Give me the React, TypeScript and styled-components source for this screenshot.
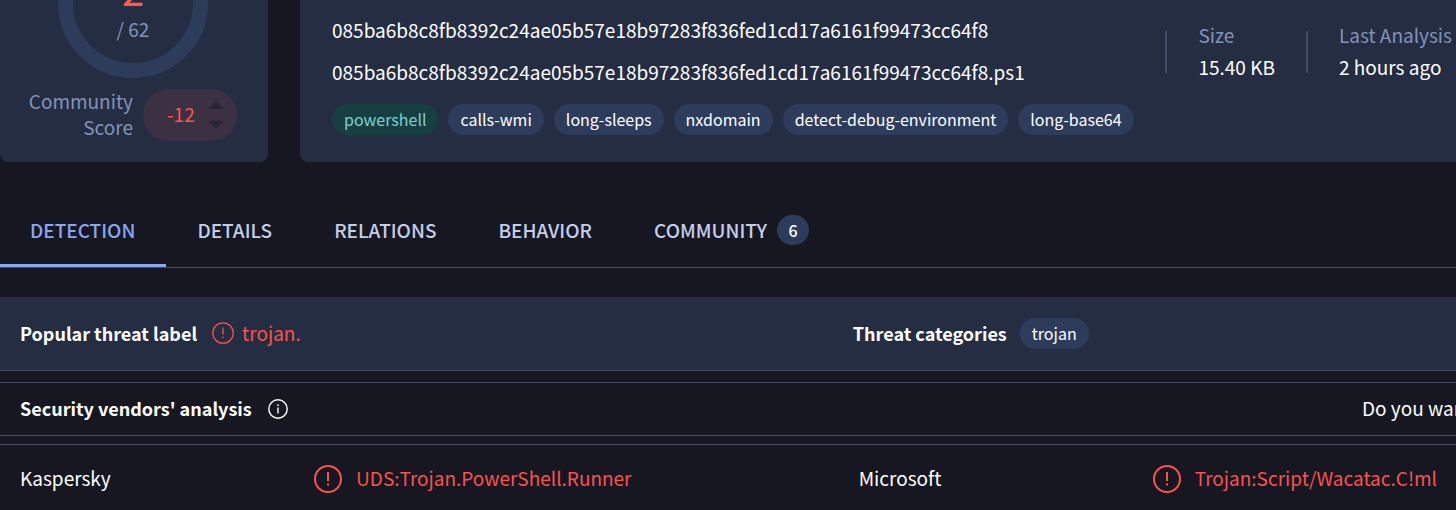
import React from "react";
import styled, { createGlobalStyle } from "styled-components";

const color = {
  page: "#171722",
  panel: "#252d43",
  chip: "#2e3c5b",
  line: "#414d67",
  text: "#ffffff",
  muted: "#8293b9",
  tab: "#c3cfea",
  accent: "#87a7f2",
  red: "#fb514f",
};

const GlobalStyle = createGlobalStyle`
  *, *::before, *::after { box-sizing: border-box; }
  html, body { margin: 0; background: ${color.page}; overflow: hidden; }
  body {
    font-family: "Noto Sans CJK SC", "Noto Sans", sans-serif;
    font-size: 19px;
    line-height: 26px;
    color: ${color.text};
  }
  button { font: inherit; border: 0; background: none; padding: 0; cursor: pointer; }
  a { text-decoration: none; }
`;

const Summary = styled.header`
  display: flex;
  gap: 32px;
  margin-top: -72px;
`;

const ScoreCard = styled.section`
  flex: none;
  width: 268px;
  height: 234px;
  border-radius: 8px;
  background: ${color.panel};
`;

const Gauge = styled.div`
  display: grid;
  justify-items: center;
  align-content: end;
  width: 150px;
  height: 150px;
  margin: 0 auto 10px 58px;
  padding-bottom: 21px;
  border: 15px solid ${color.chip};
  border-radius: 50%;
`;

const Detections = styled.strong`
  margin-bottom: 7px;
  font-size: 40px;
  line-height: 40px;
  font-weight: 400;
  color: #ff5a50;
`;

const Total = styled.span`
  color: ${color.muted};
`;

const Community = styled.div`
  display: flex;
  align-items: center;
  gap: 10px;
  justify-content: flex-end;
  padding-right: 31px;
`;

const CommunityLabel = styled.div`
  width: 110px;
  padding-bottom: 2px;
  text-align: right;
  color: ${color.muted};
`;

const Votes = styled.div`
  display: flex;
  align-items: center;
  gap: 13px;
  width: 94px;
  height: 52px;
  padding-left: 24px;
  border-radius: 26px;
  background: #3b3143;
  color: ${color.red};
`;

const Score = styled.span`
  padding-bottom: 2px;
`;

const VoteButtons = styled.div`
  display: grid;
  gap: 12px;
`;

const VoteButton = styled.button`
  display: block;
  width: 16px;
  height: 8px;
  svg { display: block; }
`;

const FileCard = styled.section`
  display: flex;
  flex: 1;
  min-width: 0;
  justify-content: space-between;
  padding: 89px 0 27px 32px;
  border-radius: 8px 0 0 8px;
  background: ${color.panel};
`;

const FileInfo = styled.div`
  flex: none;
`;

const FileName = styled.div`
  margin-bottom: 16px;
`;

const Tags = styled.div`
  display: flex;
  gap: 10px;
  margin-top: 19px;
`;

const Tag = styled.a<{ $green?: boolean }>`
  display: block;
  padding: 0 12px;
  border-radius: 16px;
  font-size: 16px;
  line-height: 31px;
  background: ${(p) => (p.$green ? "#173e40" : color.chip)};
  color: ${(p) => (p.$green ? "#79d0d4" : color.text)};
`;

const Facts = styled.dl`
  display: flex;
  flex: none;
  margin: 14px 0 0;
`;

const Fact = styled.div`
  height: 42px;
  padding: 0 31px;
  border-left: 2px solid ${color.line};
  white-space: nowrap;
  &:last-child { padding-right: 4px; }
`;

const FactName = styled.dt`
  margin: -9px 0 6px;
  color: ${color.muted};
`;

const FactValue = styled.dd`
  margin: 0;
`;

const Tabs = styled.nav`
  display: flex;
  height: 106px;
  padding-top: 37px;
  border-bottom: 1px solid ${color.line};
`;

const Tab = styled.button<{ $active?: boolean }>`
  && {
    display: flex;
    align-items: center;
    gap: 10px;
    padding: 0 31px 4px;
    font-weight: 500;
    color: ${(p) => (p.$active ? color.accent : color.tab)};
    border-bottom: 3px solid ${(p) => (p.$active ? color.accent : "transparent")};
  }
  &&:first-child { padding-left: 30px; }
`;

const Count = styled.span`
  width: 32px;
  border-radius: 15px;
  font-size: 16px;
  line-height: 30px;
  background: ${color.chip};
  color: ${color.text};
`;

const ThreatRow = styled.section`
  display: grid;
  grid-template-columns: 41fr 29fr;
  height: 74px;
  margin: 29px 0 11px;
  border-bottom: 1px solid ${color.line};
  background: ${color.panel};
`;

const ThreatItem = styled.div`
  display: flex;
  align-items: center;
  gap: 13px;
  &:first-child { padding-left: 20px; }
`;

const Heading = styled.h2`
  margin: 0;
  padding-bottom: 2px;
  font-size: 18px;
  line-height: 26px;
  font-weight: 700;
`;

const Threat = styled.span`
  display: flex;
  align-items: center;
  gap: 8px;
  padding: 0 0 2px 2px;
  color: ${color.red};
`;

const AnalysisBar = styled.section`
  display: flex;
  align-items: center;
  gap: 16px;
  height: 54px;
  margin-bottom: 8px;
  padding-left: 20px;
  border: solid ${color.line};
  border-width: 1px 0;
`;

const Automate = styled.a`
  width: 94px;
  margin-left: auto;
  padding-bottom: 2px;
  overflow: hidden;
  white-space: nowrap;
  color: ${color.text};
`;

const Vendors = styled.table`
  width: 100%;
  table-layout: fixed;
  border-collapse: collapse;
  border-top: 1px solid ${color.line};
`;

const Vendor = styled.th`
  width: 20.2%;
  height: 65px;
  padding: 2px 0 0 20px;
  text-align: left;
  font-weight: 400;
`;

const Result = styled.td<{ $last?: boolean }>`
  width: ${(p) => (p.$last ? "auto" : "37.4%")};
  padding: 4px 0 0 20px;
  color: ${color.red};
`;

const Verdict = styled.span`
  display: flex;
  align-items: center;
  gap: 14px;
  white-space: nowrap;
`;

const VerdictName = styled.span`
  padding-bottom: 2px;
`;

const Svg = styled.svg`
  flex: none;
  display: block;
  fill: none;
  stroke: currentColor;
`;

function AlertIcon({ size, stroke }: { size: number; stroke: number }) {
  return (
    <Svg width={size} height={size} viewBox="0 0 28 28" strokeWidth={stroke} aria-hidden="true">
      <circle cx="14" cy="14" r="13" />
      <path d="M14 7v9M14 18.5v2" />
    </Svg>
  );
}

function InfoIcon() {
  return (
    <Svg width="20" height="20" viewBox="0 0 20 20" strokeWidth="1.4" aria-hidden="true">
      <circle cx="10" cy="10" r="9.2" />
      <path d="M10 8.5v6M10 5.3v1.7" />
    </Svg>
  );
}

const tags = ["powershell", "calls-wmi", "long-sleeps", "nxdomain", "detect-debug-environment", "long-base64"];
const tabs = ["DETECTION", "DETAILS", "RELATIONS", "BEHAVIOR", "COMMUNITY"];
const vendors = [
  ["Kaspersky", "UDS:Trojan.PowerShell.Runner"],
  ["Microsoft", "Trojan:Script/Wacatac.C!ml"],
];
const hash = "085ba6b8c8fb8392c24ae05b57e18b97283f836fed1cd17a6161f99473cc64f8";

export default function App() {
  return (
    <>
      <GlobalStyle />
      <main>
        <Summary>
          <ScoreCard>
            <Gauge>
              <Detections>2</Detections>
              <Total>/ 62</Total>
            </Gauge>
            <Community>
              <CommunityLabel>Community Score</CommunityLabel>
              <Votes>
                <Score>-12</Score>
                <VoteButtons>
                  <VoteButton aria-label="Vote up">
                    <svg width="16" height="8"><path d="M0 8L8 0l8 8z" fill="#282739" /></svg>
                  </VoteButton>
                  <VoteButton aria-label="Vote down">
                    <svg width="16" height="8"><path d="M0 0h16L8 8z" fill="#282739" /></svg>
                  </VoteButton>
                </VoteButtons>
              </Votes>
            </Community>
          </ScoreCard>
          <FileCard>
            <FileInfo>
              <FileName>{hash}</FileName>
              <FileName>{hash}.ps1</FileName>
              <Tags>
                {tags.map((t, i) => (
                  <Tag key={t} href="#" $green={i === 0}>{t}</Tag>
                ))}
              </Tags>
            </FileInfo>
            <Facts>
              <Fact>
                <FactName>Size</FactName>
                <FactValue>15.40 KB</FactValue>
              </Fact>
              <Fact>
                <FactName>Last Analysis</FactName>
                <FactValue>2 hours ago</FactValue>
              </Fact>
            </Facts>
          </FileCard>
        </Summary>

        <Tabs>
          {tabs.map((t, i) => (
            <Tab key={t} $active={i === 0}>
              {t}
              {t === "COMMUNITY" && <Count>6</Count>}
            </Tab>
          ))}
        </Tabs>

        <ThreatRow>
          <ThreatItem>
            <Heading>Popular threat label</Heading>
            <Threat>
              <AlertIcon size={22} stroke={1.6} />
              trojan.
            </Threat>
          </ThreatItem>
          <ThreatItem>
            <Heading>Threat categories</Heading>
            <Tag href="#">trojan</Tag>
          </ThreatItem>
        </ThreatRow>

        <AnalysisBar>
          <Heading>Security vendors' analysis</Heading>
          <InfoIcon />
          <Automate href="#">Do you want</Automate>
        </AnalysisBar>

        <Vendors>
          <tbody>
            <tr>
              {vendors.map(([name, result], i) => (
                <React.Fragment key={name}>
                  <Vendor scope="row">{name}</Vendor>
                  <Result $last={i === 1}>
                    <Verdict>
                      <AlertIcon size={28} stroke={2} />
                      <VerdictName>{result}</VerdictName>
                    </Verdict>
                  </Result>
                </React.Fragment>
              ))}
            </tr>
          </tbody>
        </Vendors>
      </main>
    </>
  );
}
